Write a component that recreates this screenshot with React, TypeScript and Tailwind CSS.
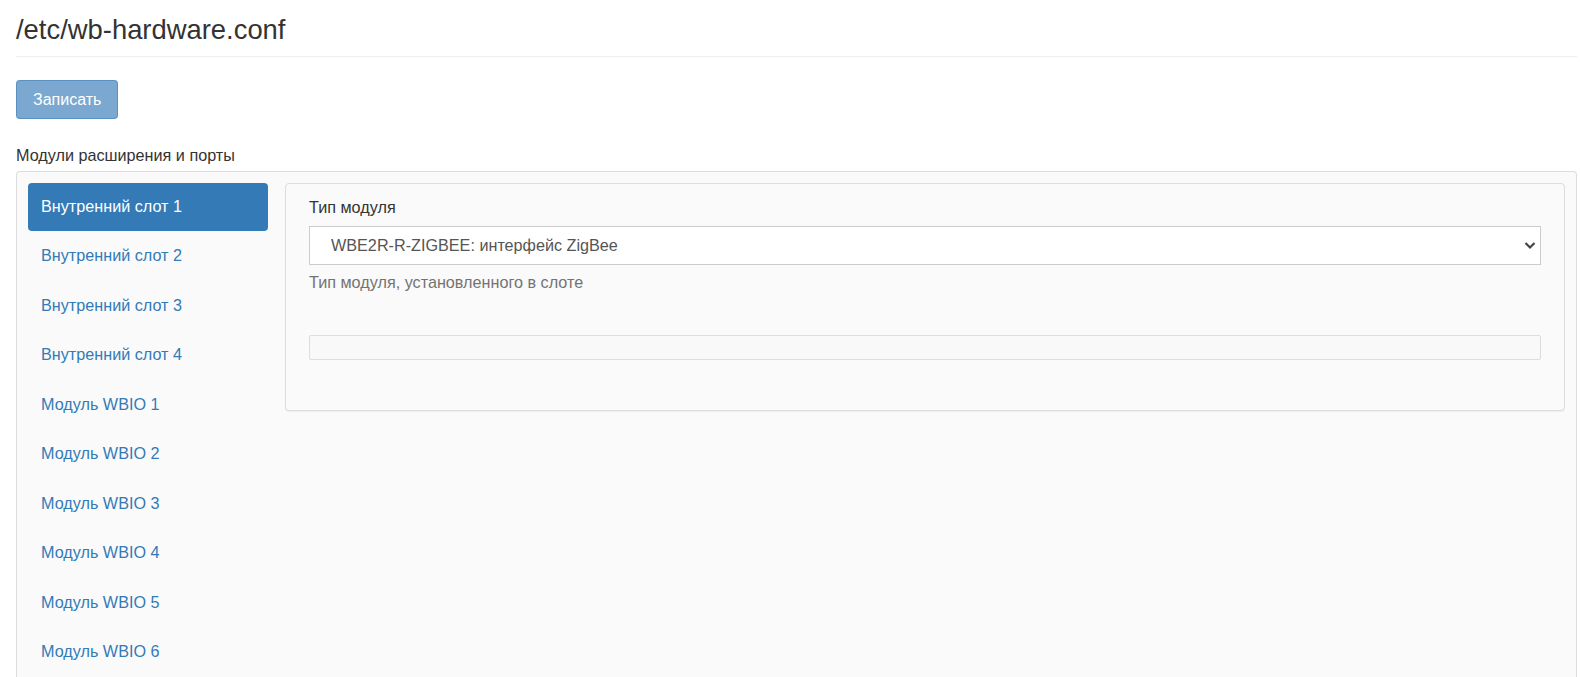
import { useState } from 'react';

const slots = [
  'Внутренний слот 1',
  'Внутренний слот 2',
  'Внутренний слот 3',
  'Внутренний слот 4',
  'Модуль WBIO 1',
  'Модуль WBIO 2',
  'Модуль WBIO 3',
  'Модуль WBIO 4',
  'Модуль WBIO 5',
  'Модуль WBIO 6',
];

export default function App() {
  const [active, setActive] = useState(0);
  const [moduleType, setModuleType] = useState('wbe2r-r-zigbee');

  return (
    <div className="min-h-screen bg-white pl-4 pr-[3px] text-[16.2px] leading-[23px] text-[#333]" style={{ fontFamily: '"Liberation Sans", Arial, sans-serif' }}>
      {/* заголовок */}
      <div className="border-b border-[#eee] pt-[15px] pb-[11px]">
        <h1 className="text-[27.4px] leading-[30px] font-normal text-[#333]">/etc/wb-hardware.conf</h1>
      </div>

      <button
        type="button"
        disabled
        className="mt-[23px] h-[39px] rounded-[4px] border border-[#2e6da4]/40 bg-[#7aa8d0] px-4 text-[16px] text-white cursor-not-allowed"
      >
        Записать
      </button>

      <div className="mt-[25px] mb-[4px]">Модули расширения и порты</div>

      <div className="flex gap-[17px] rounded-t-[4px] border border-b-0 border-[#ddd] bg-[#fafafa] p-[11px] pb-10">
        {/* список слотов */}
        <ul className="flex w-[240px] shrink-0 flex-col gap-[2px]">
          {slots.map((name, i) => (
            <li key={name}>
              <a
                href="#"
                onClick={(e) => {
                  e.preventDefault();
                  setActive(i);
                }}
                className={
                  i === active
                    ? 'block rounded-[4px] bg-[#337ab7] px-[13px] pt-[11.5px] pb-[12.5px] leading-[23.5px] text-white'
                    : 'block rounded-[4px] px-[13px] pt-[11.5px] pb-[12.5px] leading-[23.5px] text-[#337ab7] hover:bg-[#eee]'
                }
              >
                {name}
              </a>
            </li>
          ))}
        </ul>

        {/* параметры слота */}
        <div className="h-[228px] flex-1 rounded-[4px] border border-[#ddd] bg-[#fafafa] px-[23px] pt-3 shadow-[0_1px_1px_rgba(0,0,0,0.05)]">
          <label className="block mb-[7px] text-[#333]">Тип модуля</label>
          <div className="relative">
            <select
              value={moduleType}
              onChange={(e) => setModuleType(e.target.value)}
              className="block h-[39px] w-full appearance-none border border-[#ccc] bg-white pl-[21px] pr-8 text-[16.2px] text-[#555] focus:outline-none"
            >
              <option value="wbe2r-r-zigbee">WBE2R-R-ZIGBEE: интерфейс ZigBee</option>
              <option value="none">Не установлен</option>
            </select>
            <svg className="pointer-events-none absolute right-[5px] top-[15px]" width="12" height="9" viewBox="0 0 12 9">
              <path d="M1.5 2 L6 6.5 L10.5 2" fill="none" stroke="#444" strokeWidth="2.2" />
            </svg>
          </div>
          <p className="mt-[6px] text-[#737373]">Тип модуля, установленного в слоте</p>
          <div className="mt-[41px] h-[25px] rounded-[2px] border border-[#ddd] bg-[#f9f9f9]"></div>
        </div>
      </div>
    </div>
  );
}
